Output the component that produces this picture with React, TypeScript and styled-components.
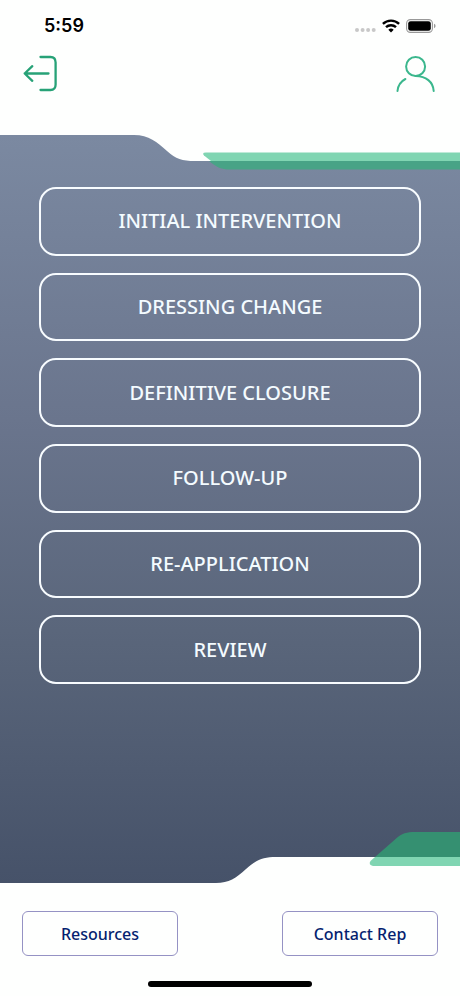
import React from "react";
import styled, { createGlobalStyle } from "styled-components";

const GlobalStyle = createGlobalStyle`
  *, *::before, *::after { box-sizing: border-box; }
  body { margin: 0; background: #fefffe; font-family: "Noto Sans", sans-serif; }
  button { font-family: inherit; cursor: pointer; }
`;

const Screen = styled.div`
  display: flex;
  flex-direction: column;
  min-height: 100vh;
`;

const StatusBar = styled.div`
  display: flex;
  align-items: center;
  justify-content: space-between;
  height: 52px;
  padding: 0 24px 0 44px;
`;

const Time = styled.time`
  font: 600 18px/24px Inter, sans-serif;
  color: #000;
`;

const StatusIcons = styled.div`
  display: flex;
  align-items: center;
  gap: 6px;
`;

const Header = styled.header`
  display: flex;
  justify-content: space-between;
  height: 83px;
  padding: 0 22px;
`;

const IconButton = styled.button`
  display: flex;
  height: 44px;
  padding: 0;
  border: 0;
  background: none;
`;

const Panel = styled.main`
  position: relative;
  flex: 1;
  padding: 52px 39px 120px;
  background: linear-gradient(#7b89a1, #6a758d 38%, #59657a 68%, #465269);
`;

const Edge = styled.svg<{ $side: "top" | "bottom" }>`
  position: absolute;
  left: 0;
  ${({ $side }) => $side}: 0;
  width: 100%;
  height: 52px;
`;

const Menu = styled.nav`
  display: grid;
  grid-auto-rows: 1fr;
  gap: 17px;
  height: 497px;
`;

const MenuButton = styled.button`
  border: 2px solid #f8fcff;
  border-radius: 17px;
  padding: 0 16px;
  background: none;
  color: #f4fbff;
  font-size: 20px;
  font-weight: 500;
  line-height: 28px;
`;

const Footer = styled.footer`
  display: flex;
  flex-direction: column;
  justify-content: space-between;
  align-items: center;
  height: 113px;
  padding: 28px 22px 9px;
`;

const Actions = styled.div`
  display: flex;
  justify-content: space-between;
  width: 100%;
`;

const ActionButton = styled.button`
  width: 156px;
  height: 45px;
  padding: 0;
  border: 1px solid #9592c4;
  border-radius: 6px;
  background: none;
  color: #051f70;
  font-size: 16px;
  font-weight: 500;
  line-height: 24px;
`;

const HomeIndicator = styled.div`
  width: 164px;
  height: 6px;
  border-radius: 3px;
  background: #000;
`;

const stages = [
  "INITIAL INTERVENTION",
  "DRESSING CHANGE",
  "DEFINITIVE CLOSURE",
  "FOLLOW-UP",
  "RE-APPLICATION",
  "REVIEW",
];

const SignalDots = () => (
  <svg width="21" height="16" viewBox="0 0 21 16" fill="#c8c8c8" aria-hidden="true">
    <circle cx="2" cy="12" r="2" />
    <circle cx="7.6" cy="12" r="2" />
    <circle cx="13.1" cy="12" r="2" />
    <circle cx="18.7" cy="12" r="2" />
  </svg>
);

const Wifi = () => (
  <svg width="18" height="14" viewBox="0 0 18 14" fill="none" stroke="#000" strokeWidth="2.4" aria-hidden="true">
    <path d="M.9 4.9A11.7 11.7 0 0 1 17.1 4.9" />
    <path d="M4 8.2A7.2 7.2 0 0 1 14 8.2" />
    <path d="M9 13.4 6.3 10.8A3.9 3.9 0 0 1 11.7 10.8Z" fill="#000" stroke="none" />
  </svg>
);

const Battery = () => (
  <svg width="30" height="14" viewBox="0 0 30 14" aria-hidden="true">
    <rect x=".6" y=".6" width="25.8" height="12.8" rx="3.8" fill="none" stroke="#999" strokeWidth="1.1" />
    <rect x="2.2" y="2.2" width="22.6" height="9.6" rx="2.4" />
    <path d="M28 4.8Q29.6 5.4 29.6 7T28 9.2Z" fill="#999" />
  </svg>
);

const ExitIcon = () => (
  <svg width="38" height="44" viewBox="0 0 38 44" fill="none" stroke="#27a277" strokeWidth="2.3" strokeLinecap="round" strokeLinejoin="round" aria-hidden="true">
    <path d="M18.5 5H28.5Q33.6 5 33.6 10.5V32.5Q33.6 38 28.5 38H18.5" />
    <path d="M26.5 21.5H2.7M10.3 14.2 2.7 21.5 10.3 28.8" />
  </svg>
);

const ProfileIcon = () => (
  <svg width="44" height="44" viewBox="0 0 44 44" fill="none" stroke="#3bb78d" strokeWidth="2" strokeLinecap="round" aria-hidden="true">
    <circle cx="21.6" cy="14.5" r="9.5" />
    <path d="M3.5 39C4 33.7 6.7 29.5 11.4 27M21.6 24C32 24.2 39.2 29.8 39.7 39" />
  </svg>
);

export default function App() {
  return (
    <>
      <GlobalStyle />
      <Screen>
        <StatusBar>
          <Time>5:59</Time>
          <StatusIcons>
            <SignalDots />
            <Wifi />
            <Battery />
          </StatusIcons>
        </StatusBar>
        <Header>
          <IconButton aria-label="Sign out"><ExitIcon /></IconButton>
          <IconButton aria-label="Profile"><ProfileIcon /></IconButton>
        </Header>
        <Panel>
          <Edge $side="top" viewBox="0 0 460 52" preserveAspectRatio="none" aria-hidden="true">
            <path d="M0 0H134C149 0 157 7 167 16C176 24 182 26 195 26H460V-1H0Z" fill="#fefffe" />
            <path d="M206 17.5H460V26H211L204 20.5Q201.500 17.500 206 17.500Z" fill="#80d5b2" />
            <path d="M209 26H460V34.500H230C221 34.500 217 32.500 209 26Z" fill="#48a386" />
          </Edge>
          <Menu aria-label="Treatment stages">
            {stages.map((stage) => <MenuButton key={stage}>{stage}</MenuButton>)}
          </Menu>
          <Edge $side="bottom" viewBox="0 0 460 52" preserveAspectRatio="none" aria-hidden="true">
            <path d="M216 52C229 52 236 47 246 38C256 29 263 26 276 26H460V52Z" fill="#fefffe" />
            <path d="M375 26H460V35H373Q368 34 370.500 30Z" fill="#80d5b2" />
            <path d="M375 26 395 8.500C402 2 407 1 415 1H460V26Z" fill="#359071" />
          </Edge>
        </Panel>
        <Footer>
          <Actions>
            <ActionButton>Resources</ActionButton>
            <ActionButton>Contact Rep</ActionButton>
          </Actions>
          <HomeIndicator />
        </Footer>
      </Screen>
    </>
  );
}
